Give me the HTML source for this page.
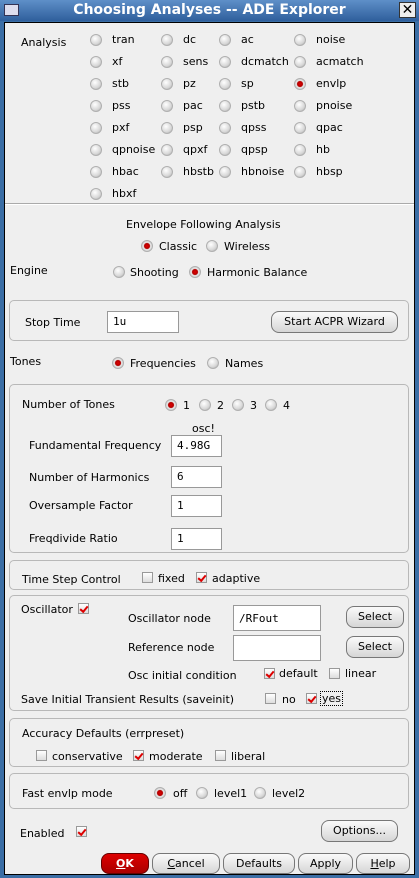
<!DOCTYPE html>
<html><head><meta charset="utf-8"><style>
*{box-sizing:border-box}
body{margin:0;width:419px;height:878px;background:#3b6ea5;font-family:"DejaVu Sans","Liberation Sans",sans-serif;font-size:11px;color:#000;position:relative;overflow:hidden}
.t{position:absolute;white-space:nowrap;line-height:13px}
#title{position:absolute;left:0;top:0;width:419px;height:21px;background:linear-gradient(#5e8fc8,#2f5f9c);color:#fff;font-weight:bold;font-size:14px;text-align:center;line-height:21px}
#main{position:absolute;left:4px;top:22px;width:411px;height:853px;background:#efefef;border:1px solid #000}
.r{position:absolute;width:12px;height:12px;margin:-1px 0 0 -1px;border-radius:50%;background:radial-gradient(circle at 40% 35%,#fff,#d8d8d8 60%,#a8a8a8);border:1px solid #b0b0b0}
.r.on{background:radial-gradient(circle,#e00000 0,#b00000 38%,#e8e8e8 48%,#c8c8c8 85%)}
.c{position:absolute;width:11px;height:11px;background:linear-gradient(#fff,#ddd);border:1px solid #999}
.c.on::after{content:"";position:absolute;left:1px;width:6px;height:3px;border-left:2.5px solid #d00;border-bottom:2.5px solid #d00;transform:rotate(-50deg);transform-origin:center;top:2px}
.box{position:absolute;border:1px solid #b8b8b8;border-radius:5px}
.in{position:absolute;background:#fff;border:1px solid #999;padding-left:5px;line-height:20px;font-family:"DejaVu Sans Mono","Liberation Mono",monospace;font-size:11px}
.b{position:absolute;border:1px solid #777;border-radius:8px;background:linear-gradient(#fafafa,#d6d6d6);text-align:center;line-height:20px}
</style></head><body>
<div id="title"><span style="position:absolute;left:4px;top:4px;width:15px;height:12px;background:#dde;border:1px solid #335"></span>Choosing Analyses -- ADE Explorer<span style="position:absolute;right:3px;top:2px;width:17px;height:16px;background:#eee;border:1px solid #333;color:#000;line-height:14px;font-size:14px;font-weight:normal">✕</span></div>
<div id="main"></div>
<div class="t" style="left:21px;top:36px">Analysis</div>
<div id="grid"></div>
<div style="position:absolute;left:5px;top:203px;width:409px;border-top:1px solid #aaa;border-bottom:1px solid #fff"></div>
<div class="t" style="left:126px;top:218px">Envelope Following Analysis</div>
<div class="r on" style="left:142px;top:241px"></div><div class="t" style="left:159px;top:240px">Classic</div>
<div class="r" style="left:207px;top:241px"></div><div class="t" style="left:224px;top:240px">Wireless</div>
<div class="t" style="left:10px;top:264px">Engine</div>
<div class="r" style="left:114px;top:267px"></div><div class="t" style="left:130px;top:266px">Shooting</div>
<div class="r on" style="left:190px;top:267px"></div><div class="t" style="left:207px;top:266px">Harmonic Balance</div>

<div class="box" style="left:9px;top:300px;width:400px;height:41px"></div>
<div class="t" style="left:25px;top:316px">Stop Time</div>
<div class="in" style="left:107px;top:311px;width:72px;height:22px">1u</div>
<div class="b" style="left:271px;top:311px;width:127px;height:22px">Start ACPR Wizard</div>

<div class="t" style="left:10px;top:355px">Tones</div>
<div class="r on" style="left:113px;top:358px"></div><div class="t" style="left:130px;top:357px">Frequencies</div>
<div class="r" style="left:208px;top:358px"></div><div class="t" style="left:225px;top:357px">Names</div>

<div class="box" style="left:9px;top:384px;width:400px;height:169px"></div>
<div class="t" style="left:22px;top:398px">Number of Tones</div>
<div class="r on" style="left:166px;top:400px"></div><div class="t" style="left:183px;top:399px">1</div>
<div class="r" style="left:200px;top:400px"></div><div class="t" style="left:217px;top:399px">2</div>
<div class="r" style="left:233px;top:400px"></div><div class="t" style="left:250px;top:399px">3</div>
<div class="r" style="left:266px;top:400px"></div><div class="t" style="left:283px;top:399px">4</div>
<div class="t" style="left:192px;top:422px">osc!</div>
<div class="t" style="left:29px;top:439px">Fundamental Frequency</div>
<div class="in" style="left:171px;top:435px;width:51px;height:22px">4.98G</div>
<div class="t" style="left:29px;top:471px">Number of Harmonics</div>
<div class="in" style="left:171px;top:466px;width:51px;height:22px">6</div>
<div class="t" style="left:29px;top:499px">Oversample Factor</div>
<div class="in" style="left:171px;top:495px;width:51px;height:22px">1</div>
<div class="t" style="left:29px;top:532px">Freqdivide Ratio</div>
<div class="in" style="left:171px;top:528px;width:51px;height:22px">1</div>

<div class="box" style="left:9px;top:560px;width:400px;height:30px"></div>
<div class="t" style="left:22px;top:573px">Time Step Control</div>
<div class="c" style="left:142px;top:572px"></div><div class="t" style="left:158px;top:572px">fixed</div>
<div class="c on" style="left:196px;top:572px"></div><div class="t" style="left:212px;top:572px">adaptive</div>

<div class="box" style="left:9px;top:595px;width:400px;height:116px"></div>
<div class="t" style="left:21px;top:603px">Oscillator</div><div class="c on" style="left:78px;top:603px"></div>
<div class="t" style="left:128px;top:612px">Oscillator node</div>
<div class="in" style="left:233px;top:605px;width:88px;height:26px;line-height:26px">/RFout</div>
<div class="b" style="left:346px;top:606px;width:58px;height:22px">Select</div>
<div class="t" style="left:128px;top:641px">Reference node</div>
<div class="in" style="left:233px;top:635px;width:88px;height:26px"></div>
<div class="b" style="left:346px;top:636px;width:58px;height:22px">Select</div>
<div class="t" style="left:128px;top:669px">Osc initial condition</div>
<div class="c on" style="left:264px;top:668px"></div><div class="t" style="left:279px;top:667px">default</div>
<div class="c" style="left:329px;top:668px"></div><div class="t" style="left:345px;top:667px">linear</div>
<div class="t" style="left:21px;top:693px">Save Initial Transient Results (saveinit)</div>
<div class="c" style="left:265px;top:693px"></div><div class="t" style="left:282px;top:693px">no</div>
<div class="c on" style="left:306px;top:693px"></div><div class="t" style="left:320px;top:691px;border:1px dotted #000;padding:0 1px">yes</div>

<div class="box" style="left:9px;top:718px;width:400px;height:49px"></div>
<div class="t" style="left:22px;top:727px">Accuracy Defaults (errpreset)</div>
<div class="c" style="left:36px;top:750px"></div><div class="t" style="left:52px;top:750px">conservative</div>
<div class="c on" style="left:133px;top:750px"></div><div class="t" style="left:149px;top:750px">moderate</div>
<div class="c" style="left:215px;top:750px"></div><div class="t" style="left:231px;top:750px">liberal</div>

<div class="box" style="left:9px;top:773px;width:400px;height:36px"></div>
<div class="t" style="left:22px;top:787px">Fast envlp mode</div>
<div class="r on" style="left:155px;top:788px"></div><div class="t" style="left:173px;top:787px">off</div>
<div class="r" style="left:197px;top:788px"></div><div class="t" style="left:214px;top:787px">level1</div>
<div class="r" style="left:255px;top:788px"></div><div class="t" style="left:272px;top:787px">level2</div>

<div class="t" style="left:20px;top:827px">Enabled</div><div class="c on" style="left:76px;top:826px"></div>
<div class="b" style="left:321px;top:820px;width:77px;height:22px">Options...</div>

<div class="b" style="left:101px;top:853px;width:48px;height:21px;background:linear-gradient(#d00,#a00);color:#fff;font-weight:bold;border-color:#600;line-height:19px"><u>O</u>K</div>
<div class="b" style="left:152px;top:853px;width:68px;height:21px;line-height:19px"><u>C</u>ancel</div>
<div class="b" style="left:223px;top:853px;width:72px;height:21px;line-height:19px">Defaults</div>
<div class="b" style="left:298px;top:853px;width:55px;height:21px;line-height:19px">Apply</div>
<div class="b" style="left:356px;top:853px;width:54px;height:21px;line-height:19px"><u>H</u>elp</div>

<script>
var names=[["tran","dc","ac","noise"],["xf","sens","dcmatch","acmatch"],["stb","pz","sp","envlp"],["pss","pac","pstb","pnoise"],["pxf","psp","qpss","qpac"],["qpnoise","qpxf","qpsp","hb"],["hbac","hbstb","hbnoise","hbsp"],["hbxf"]];
var xs=[96,167,225,300],h="";
names.forEach(function(r,i){var y=40+i*22;r.forEach(function(n,j){h+='<div class="r'+(n=="envlp"?' on':'')+'" style="left:'+(xs[j]-5)+'px;top:'+(y-5)+'px"></div><div class="t" style="left:'+(xs[j]+16)+'px;top:'+(y-7)+'px">'+n+'</div>';});});
document.getElementById("grid").innerHTML=h;
</script>
</body></html>
